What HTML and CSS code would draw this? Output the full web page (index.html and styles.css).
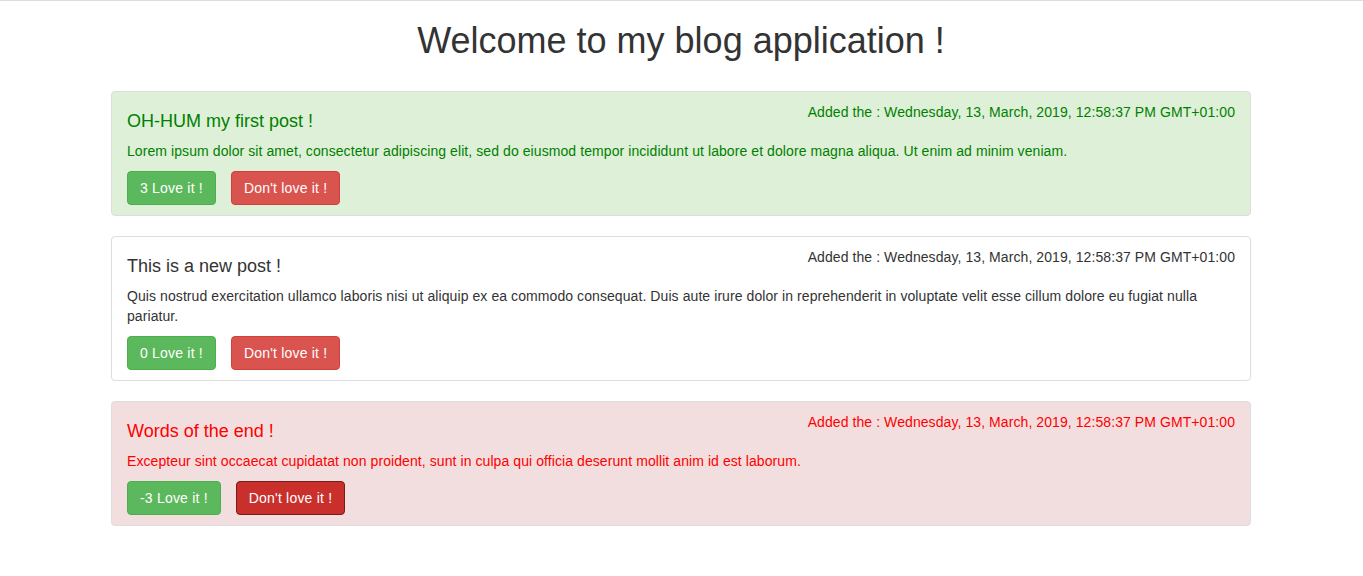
FILE: index.html
```html
<!DOCTYPE html>
<html>
<head>
<meta charset="utf-8">
<title>Blog</title>
<link rel="stylesheet" href="styles.css">
</head>
<body>
<div class="topline"></div>
<div class="container">
  <h1 class="page-title">Welcome to my blog application !</h1>
  <div class="posts">
    <div class="post post-success">
      <span class="date">Added the : Wednesday, 13, March, 2019, 12:58:37 PM GMT+01:00</span>
      <h4 class="post-title">OH-HUM my first post !</h4>
      <p class="post-text">Lorem ipsum dolor sit amet, consectetur adipiscing elit, sed do eiusmod tempor incididunt ut labore et dolore magna aliqua. Ut enim ad minim veniam.</p>
      <div class="actions">
        <button class="btn btn-success">3 Love it !</button>
        <button class="btn btn-danger">Don't love it !</button>
      </div>
    </div>
    <div class="post">
      <span class="date">Added the : Wednesday, 13, March, 2019, 12:58:37 PM GMT+01:00</span>
      <h4 class="post-title">This is a new post !</h4>
      <p class="post-text">Quis nostrud exercitation ullamco laboris nisi ut aliquip ex ea commodo consequat. Duis aute irure dolor in reprehenderit in voluptate velit esse cillum dolore eu fugiat nulla pariatur.</p>
      <div class="actions">
        <button class="btn btn-success">0 Love it !</button>
        <button class="btn btn-danger">Don't love it !</button>
      </div>
    </div>
    <div class="post post-danger">
      <span class="date">Added the : Wednesday, 13, March, 2019, 12:58:37 PM GMT+01:00</span>
      <h4 class="post-title">Words of the end !</h4>
      <p class="post-text">Excepteur sint occaecat cupidatat non proident, sunt in culpa qui officia deserunt mollit anim id est laborum.</p>
      <div class="actions">
        <button class="btn btn-success">-3 Love it !</button>
        <button class="btn btn-danger btn-active">Don't love it !</button>
      </div>
    </div>
  </div>
</div>
</body>
</html>
```

FILE: styles.css
```css
* { box-sizing: border-box; }
html, body { margin: 0; padding: 0; }
body {
  font-family: "Liberation Sans", Arial, sans-serif;
  font-size: 14px;
  line-height: 20px;
  color: #333;
  background: #fff;
}
.topline {
  height: 1px;
  background: #ddd;
}
.container {
  width: 1170px;
  margin: 0 0 0 calc(50% - 585.5px);
  padding: 0 15px;
}
.page-title {
  font-size: 36px;
  font-weight: 500;
  line-height: 1.1;
  margin: 20px 0 10px;
  text-align: center;
  color: #333;
}
.posts {
  margin-top: 30px;
  display: flex;
  flex-direction: column;
  gap: 20px;
}
.post {
  border: 1px solid #ddd;
  border-radius: 4px;
  background: #fff;
  padding: 10px 15px;
  color: #333;
  letter-spacing: 0.08px;
}
.post-success {
  background: #dff0d8;
  color: #008000;
}
.post-danger {
  background: #f2dede;
  color: #ff0000;
}
.date {
  float: right;
}
.post-title {
  font-size: 18px;
  font-weight: 500;
  line-height: 19px;
  margin: 10px 0;
  letter-spacing: 0;
}
.post-text {
  margin: 0 0 10px;
}
.actions {
  display: flex;
  gap: 15px;
}
.btn {
  font-family: "Liberation Sans", Arial, sans-serif;
  font-size: 14px;
  line-height: 20px;
  letter-spacing: 0.2px;
  padding: 6px 12px;
  border: 1px solid transparent;
  border-radius: 4px;
  color: #fff;
  cursor: pointer;
}
.btn-success {
  background: #5cb85c;
  border-color: #4cae4c;
}
.btn-danger {
  background: #d9534f;
  border-color: #d43f3a;
}
.btn-active {
  background: #c9302c;
  border-color: #761c19;
}
```
